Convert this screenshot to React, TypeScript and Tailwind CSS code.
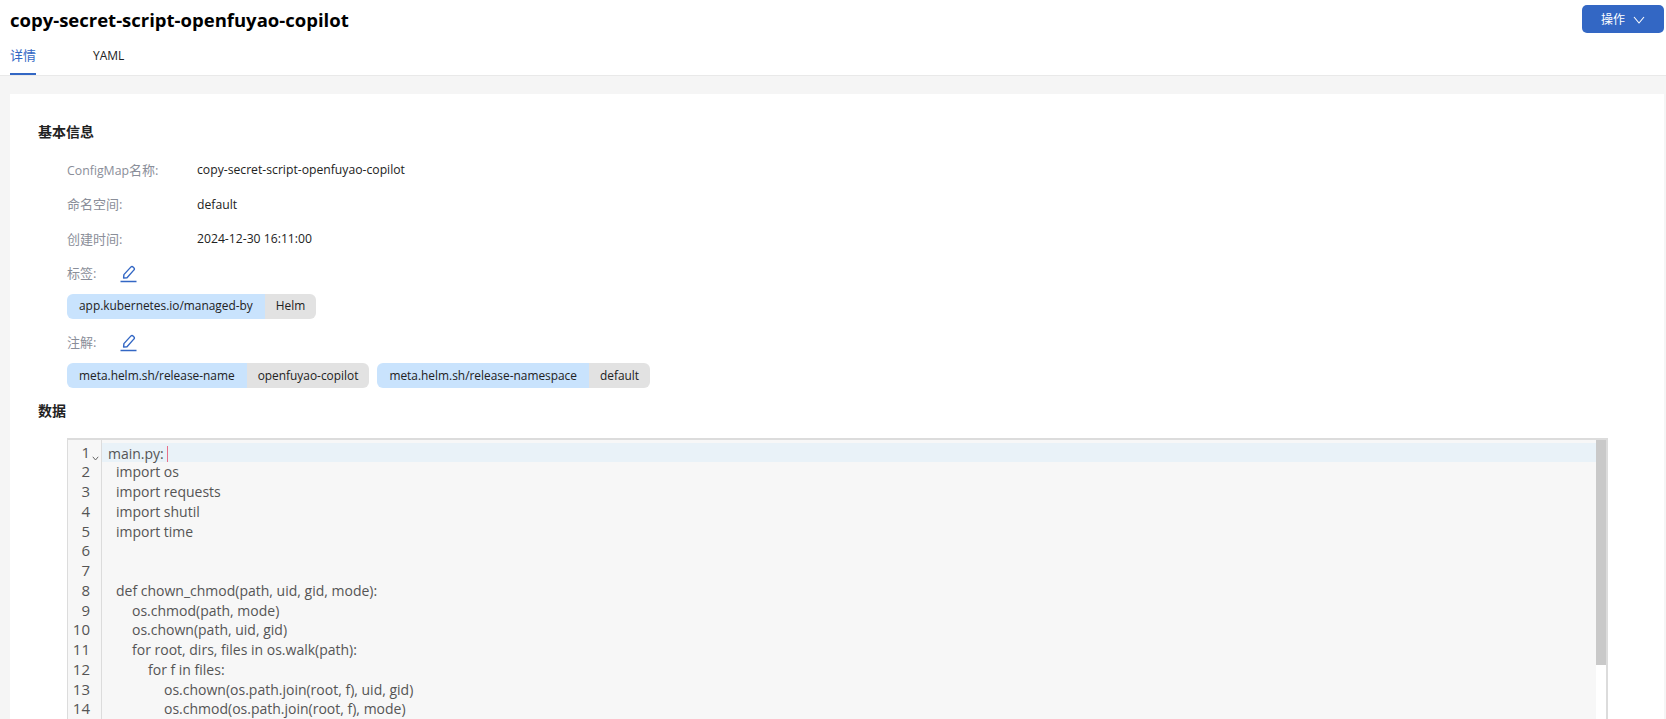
import React from "react";

const lines: [number, string][] = [
  [0, "main.py: "],
  [8, "import os"],
  [8, "import requests"],
  [8, "import shutil"],
  [8, "import time"],
  [0, ""],
  [0, ""],
  [8, "def chown_chmod(path, uid, gid, mode):"],
  [24, "os.chmod(path, mode)"],
  [24, "os.chown(path, uid, gid)"],
  [24, "for root, dirs, files in os.walk(path):"],
  [40, "for f in files:"],
  [56, "os.chown(os.path.join(root, f), uid, gid)"],
  [56, "os.chmod(os.path.join(root, f), mode)"],
];

function Pencil() {
  return (
    <svg width="17" height="18" viewBox="0 0 17 18" fill="none" stroke="#3367c4" strokeWidth="1.4">
      <path d="M3.6 13 L3.9 9.6 L11 1.9 a1.4 1.4 0 0 1 2 0 l1 1 a1.4 1.4 0 0 1 0 2 L7 12.7 Z" strokeLinejoin="round" />
      <path d="M0.5 16.5 H16.5" strokeWidth="1.5" />
    </svg>
  );
}

function Tag({ k, v }: { k: string; v: string }) {
  return (
    <div className="flex h-[25px] items-center overflow-hidden rounded-[6px] text-[11.9px] text-[#222]">
      <span className="flex h-full items-center bg-[#c9e3fd] px-[12px]">{k}</span>
      <span className="flex h-full items-center bg-[#e2e2e2] px-[11px]">{v}</span>
    </div>
  );
}

function Info({ label, value }: { label: React.ReactNode; value: string }) {
  return (
    <div className="flex h-[34.5px] items-center text-[12.2px]">
      <span className="w-[130px] text-[13px] text-[#8a8e99]">{label}</span>
      <span className="text-[#222]">{value}</span>
    </div>
  );
}

export default function App() {
  return (
    <div className="flex h-[719px] flex-col overflow-hidden bg-[#f5f5f5] font-['Open_Sans','Noto_Sans_CJK_SC',sans-serif]">
      <header className="h-[76px] shrink-0 border-b border-[#e9e9e9] bg-white">
        <div className="flex h-[38px] items-start justify-between pl-[10px] pr-[2px]">
          <h1 className="mt-[6px] text-[18.5px] leading-[28px] font-bold text-black">copy-secret-script-openfuyao-copilot</h1>
          <button className="mt-[5px] flex h-[28px] w-[82px] items-center justify-center gap-[8px] rounded-[5px] bg-[#3367c4] pt-[1px] text-[12px] text-white">
            操作
            <svg width="12" height="8" viewBox="0 0 12 8" fill="none" stroke="#fff" strokeWidth="1.1"><path d="M1 1 L6 7 L11 1" /></svg>
          </button>
        </div>
        <nav className="flex h-[37px] gap-[57px] pl-[10px] text-[12px]">
          <span className="flex h-[37px] items-center border-b-2 border-[#3367c4] text-[13px] text-[#3367c4]">详情</span>
          <span className="flex h-[37px] items-center pb-[2px] text-[#222]">YAML</span>
        </nav>
      </header>
      <main className="mt-[18px] ml-[10px] mr-[2px] flex-1 overflow-hidden bg-white pt-[28px] pl-[28px]">
        <h2 className="text-[14px] leading-[20px] font-bold text-[#222]">基本信息</h2>
        <div className="mt-[11px] pl-[29px]">
          <Info label={<><span className="text-[12.3px]">ConfigMap</span>名称:</>} value="copy-secret-script-openfuyao-copilot" />
          <Info label="命名空间:" value="default" />
          <Info label="创建时间:" value="2024-12-30 16:11:00" />
          <div className="flex h-[34px] items-center gap-[15px] text-[13px] text-[#8a8e99]"><span className="w-[38px]">标签:</span><Pencil /></div>
          <div className="mt-[3px] flex gap-[8px]"><Tag k="app.kubernetes.io/managed-by" v="Helm" /></div>
          <div className="mt-[4.5px] flex h-[40px] items-center gap-[15px] text-[13px] text-[#8a8e99]"><span className="w-[38px]">注解:</span><Pencil /></div>
          <div className="flex gap-[8px]">
            <Tag k="meta.helm.sh/release-name" v="openfuyao-copilot" />
            <Tag k="meta.helm.sh/release-namespace" v="default" />
          </div>
        </div>
        <h2 className="mt-[13px] text-[14px] leading-[20px] font-bold text-[#222]">数据</h2>
        <div className="mt-[17px] ml-[29px] flex h-[400px] w-[1541px] border-2 border-l border-[#dcdcdc]">
          <div className="w-[34px] shrink-0 border-r border-[#dcdcdc] bg-[#f7f7f7] pt-[2.5px] text-[15px] leading-[19.75px] text-[#555]">
            {lines.map((_, i) => (
              <div key={i} className="relative pr-[11px] text-right">
                {i + 1}
                {i === 0 && (
                  <svg className="absolute right-[2px] top-[13px]" width="7" height="5" viewBox="0 0 7 5" fill="none" stroke="#666" strokeWidth="1"><path d="M0.8 0.8 L3.5 4 L6.2 0.8" /></svg>
                )}
              </div>
            ))}
          </div>
          <div className="flex-1 bg-[#f7f7f7] pt-[2.5px] text-[14px] leading-[19.75px] text-[#555]">
            {lines.map(([indent, t], i) => (
              <div key={i} className={`h-[19.75px] whitespace-pre pl-[6px] ${i === 0 ? "bg-[#e9f2f8]" : ""}`}>
                <span style={{ paddingLeft: indent }}>{t}</span>
                {i === 0 && <span className="inline-block h-[16px] w-[1px] translate-y-[3px] bg-[#e8708a]" />}
              </div>
            ))}
          </div>
          <div className="flex w-[10px] shrink-0 flex-col bg-white">
            <div className="h-[225px] bg-[#c9c9c9]" />
          </div>
        </div>
      </main>
    </div>
  );
}
